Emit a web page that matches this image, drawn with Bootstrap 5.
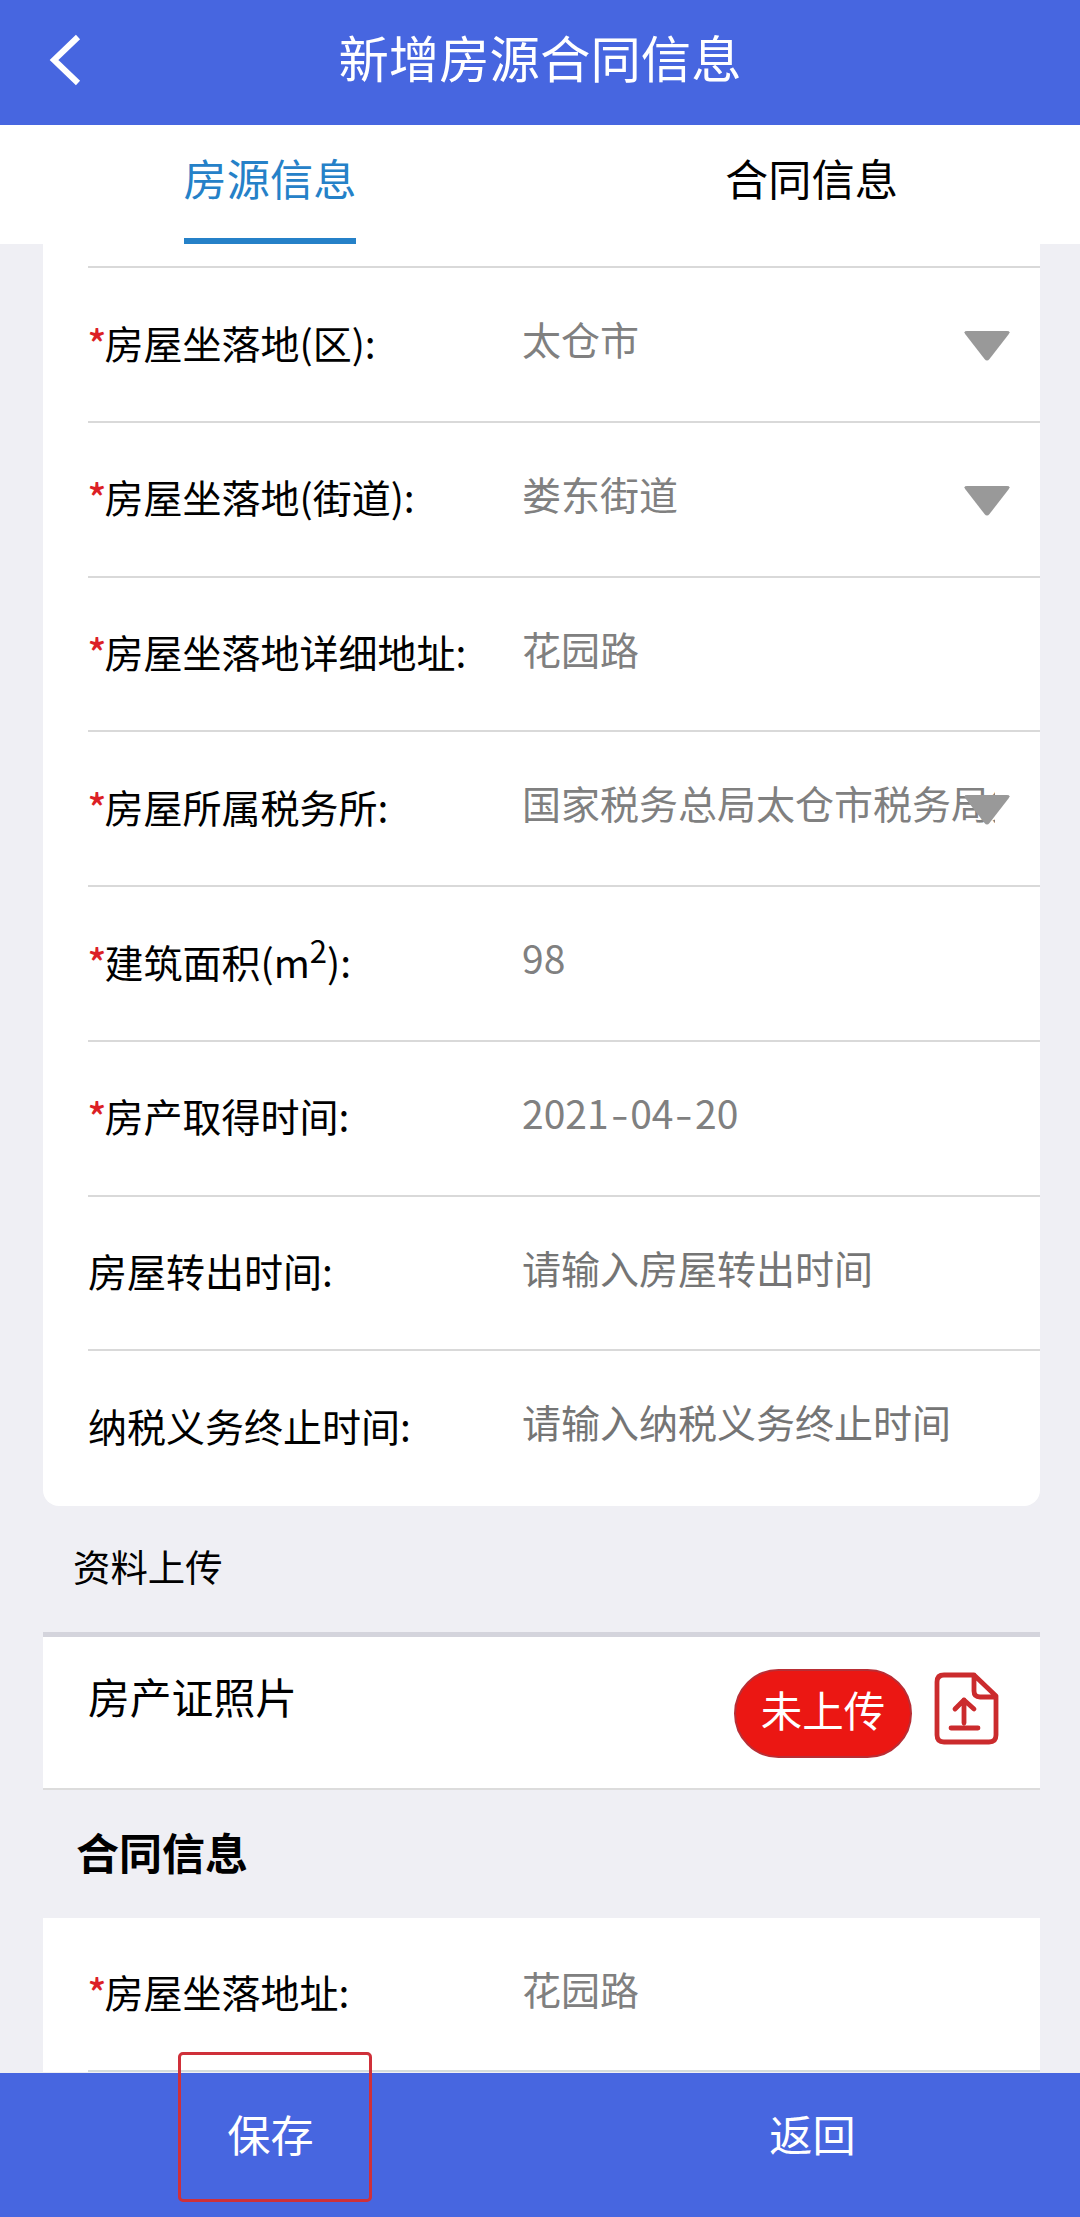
<!DOCTYPE html>
<html lang="zh-CN">
<head>
<meta charset="utf-8">
<meta name="viewport" content="width=device-width, initial-scale=1">
<title>新增房源合同信息</title>
<link href="https://cdn.jsdelivr.net/npm/bootstrap@5.3.0/dist/css/bootstrap.min.css" rel="stylesheet">
<style>
  :root { --app-blue: #4766e0; --tab-blue: #2581c8; --page-bg: #efeff4; }
  body { height: 2217px; overflow: hidden; background: var(--page-bg); color: #000;
    font-family: "Noto Sans CJK SC", sans-serif; font-size: 39px; line-height: 1.5; }
  .app-bar { height: 125px; background: var(--app-blue); padding-bottom: 10px; }
  .app-title { font-size: 50.4px; line-height: 1; }
  .back-btn { left: 48px; top: 33px; line-height: 0; }
  .app-tabs { height: 119px; flex-wrap: nowrap; }
  .app-tabs .nav-link { height: 119px; padding: 17px 0 0; color: #000; font-size: 43.2px; line-height: 70px;
    border-bottom: 6px solid transparent; border-radius: 0; }
  .app-tabs .nav-link.active { color: var(--tab-blue); border-bottom-color: var(--tab-blue); }
  .app-tabs > div + div { padding-left: 3px; }
  .page-body { padding: 0 40px 0 43px; min-height: 0; }
  .form-card { padding-left: 45px; }
  .first-card { padding-top: 22px; height: 1262px; border-radius: 0 0 16px 16px; }
  .field-row { height: 154.75px; border-top: 2px solid #d9d9d9; }
  .field-name { width: 434px; white-space: nowrap; padding-bottom: 5px; }
  .req { color: #dc1f26; font-weight: 500; display: inline-block; width: 17px; margin-left: -.5px; }
  .req + span { margin-left: 0; }
  .field-name sup { font-size: 31px; top: -.48em; line-height: 0; }
  .field-value { color: #808080; width: 473px; overflow: hidden; white-space: nowrap; padding-bottom: 12px; }
  .hint { color: #757575; }
  .field-value i { font-style: normal; display: inline-block; transform: scaleX(1.3); padding: 0 4px; }
  .caret-icon { right: 30px; top: 62px; }
  .upload-title { height: 126px; padding: 0 0 5px 30px; font-size: 37.4px; }
  .upload-row { height: 158px; border-top: 5px solid #d4d4dc; border-bottom: 2px solid #dcdcdc; padding: 0 41px 0 45px; }
  .upload-name { font-size: 41.8px; line-height: 62px; padding-top: 28px; }
  .upload-state { width: 178px; height: 89px; margin: 32px 22px 0 0; padding-bottom: 8px; font-size: 41.5px;
    color: #fff; background: #eb1713; border: 2px solid #b92e35; border-radius: 45px; }
  .upload-icon { margin-top: 35px; line-height: 0; }
  .contract-title { height: 128px; padding: 0 0 5px 33px; font-size: 43px; }
  .second-card .field-row { border-top: 0; border-bottom: 2px solid #d5dcdc; height: 154px; }
  .bottom-bar { height: 144px; background: var(--app-blue); }
  .bottom-bar .btn { color: #fff; font-size: 43.2px; line-height: 1.5; padding: 0 0 23px 1px; border: 0; border-radius: 0; }
  .bottom-bar .btn + .btn { padding-left: 5px; }
  .save-frame { left: 178px; bottom: 15px; width: 194px; height: 150px; border: 3px solid #cf303a; border-radius: 5px; pointer-events: none; }
</style>
<script src="https://cdn.jsdelivr.net/npm/bootstrap@5.3.0/dist/js/bootstrap.bundle.min.js"></script>
</head>
<body class="d-flex flex-column">
  <header class="app-bar position-relative d-flex align-items-center justify-content-center flex-shrink-0 text-white">
    <a href="#" class="back-btn position-absolute" aria-label="返回">
      <svg width="34" height="54" viewBox="0 0 34 54" fill="none" stroke="#fff" stroke-width="6"><path d="M30 4 6 27 30 50"/></svg>
    </a>
    <h1 class="app-title m-0 fw-normal">新增房源合同信息</h1>
  </header>

  <nav class="app-tabs nav bg-white flex-shrink-0">
    <div class="col-6 d-flex justify-content-center"><a class="nav-link active" href="#">房源信息</a></div>
    <div class="col-6 d-flex justify-content-center"><a class="nav-link" href="#">合同信息</a></div>
  </nav>

  <main class="page-body flex-grow-1 overflow-hidden">
    <section class="form-card first-card bg-white">
      <div class="field-row d-flex align-items-center position-relative">
        <div class="field-name"><span class="req">*</span>房屋坐落地(区):</div>
        <div class="field-value">太仓市</div>
        <svg class="caret-icon position-absolute" width="46" height="32" viewBox="0 0 46 32"><path d="M3 1H43Q47 1 44.500 4.500L25.500 29Q23 32 20.500 29L1.500 4.500Q-1 1 3 1Z" fill="#999"/></svg>
      </div>
      <div class="field-row d-flex align-items-center position-relative">
        <div class="field-name"><span class="req">*</span>房屋坐落地(街道):</div>
        <div class="field-value">娄东街道</div>
        <svg class="caret-icon position-absolute" width="46" height="32" viewBox="0 0 46 32"><path d="M3 1H43Q47 1 44.500 4.500L25.500 29Q23 32 20.500 29L1.500 4.500Q-1 1 3 1Z" fill="#999"/></svg>
      </div>
      <div class="field-row d-flex align-items-center">
        <div class="field-name"><span class="req">*</span>房屋坐落地详细地址:</div>
        <div class="field-value">花园路</div>
      </div>
      <div class="field-row d-flex align-items-center position-relative">
        <div class="field-name"><span class="req">*</span>房屋所属税务所:</div>
        <div class="field-value">国家税务总局太仓市税务局第</div>
        <svg class="caret-icon position-absolute" width="46" height="32" viewBox="0 0 46 32"><path d="M3 1H43Q47 1 44.500 4.500L25.500 29Q23 32 20.500 29L1.500 4.500Q-1 1 3 1Z" fill="#999"/></svg>
      </div>
      <div class="field-row d-flex align-items-center">
        <div class="field-name"><span class="req">*</span>建筑面积(m<sup>2</sup>):</div>
        <div class="field-value">98</div>
      </div>
      <div class="field-row d-flex align-items-center">
        <div class="field-name"><span class="req">*</span>房产取得时间:</div>
        <div class="field-value">2021<i>-</i>04<i>-</i>20</div>
      </div>
      <div class="field-row d-flex align-items-center">
        <div class="field-name">房屋转出时间:</div>
        <div class="field-value hint">请输入房屋转出时间</div>
      </div>
      <div class="field-row d-flex align-items-center">
        <div class="field-name">纳税义务终止时间:</div>
        <div class="field-value hint">请输入纳税义务终止时间</div>
      </div>
    </section>

    <div class="upload-title d-flex align-items-center">资料上传</div>
    <section class="upload-row bg-white d-flex align-items-start">
      <div class="upload-name me-auto">房产证照片</div>
      <span class="upload-state d-flex align-items-center justify-content-center">未上传</span>
      <a href="#" class="upload-icon" aria-label="上传">
        <svg width="65" height="73" viewBox="0 0 65 73" fill="none" stroke="#cb2b2d" stroke-width="4.800" stroke-linejoin="round" stroke-linecap="round">
          <path d="M40 3H10Q3 3 3 10V63Q3 70 10 70H55Q62 70 62 63V24ZM40 3V19Q40 25 46 25H61"/>
          <path d="M30 51V28M21 37 30 28 40 37M17 56H44"/>
        </svg>
      </a>
    </section>
    <h2 class="contract-title d-flex align-items-center m-0 fw-bold">合同信息</h2>
    <section class="form-card second-card bg-white">
      <div class="field-row d-flex align-items-center">
        <div class="field-name"><span class="req">*</span>房屋坐落地址:</div>
        <div class="field-value">花园路</div>
      </div>
    </section>
  </main>

  <footer class="bottom-bar position-relative d-flex flex-shrink-0">
    <button type="button" class="btn col-6">保存</button>
    <button type="button" class="btn col-6">返回</button>
    <span class="save-frame position-absolute"></span>
  </footer>
</body>
</html>
